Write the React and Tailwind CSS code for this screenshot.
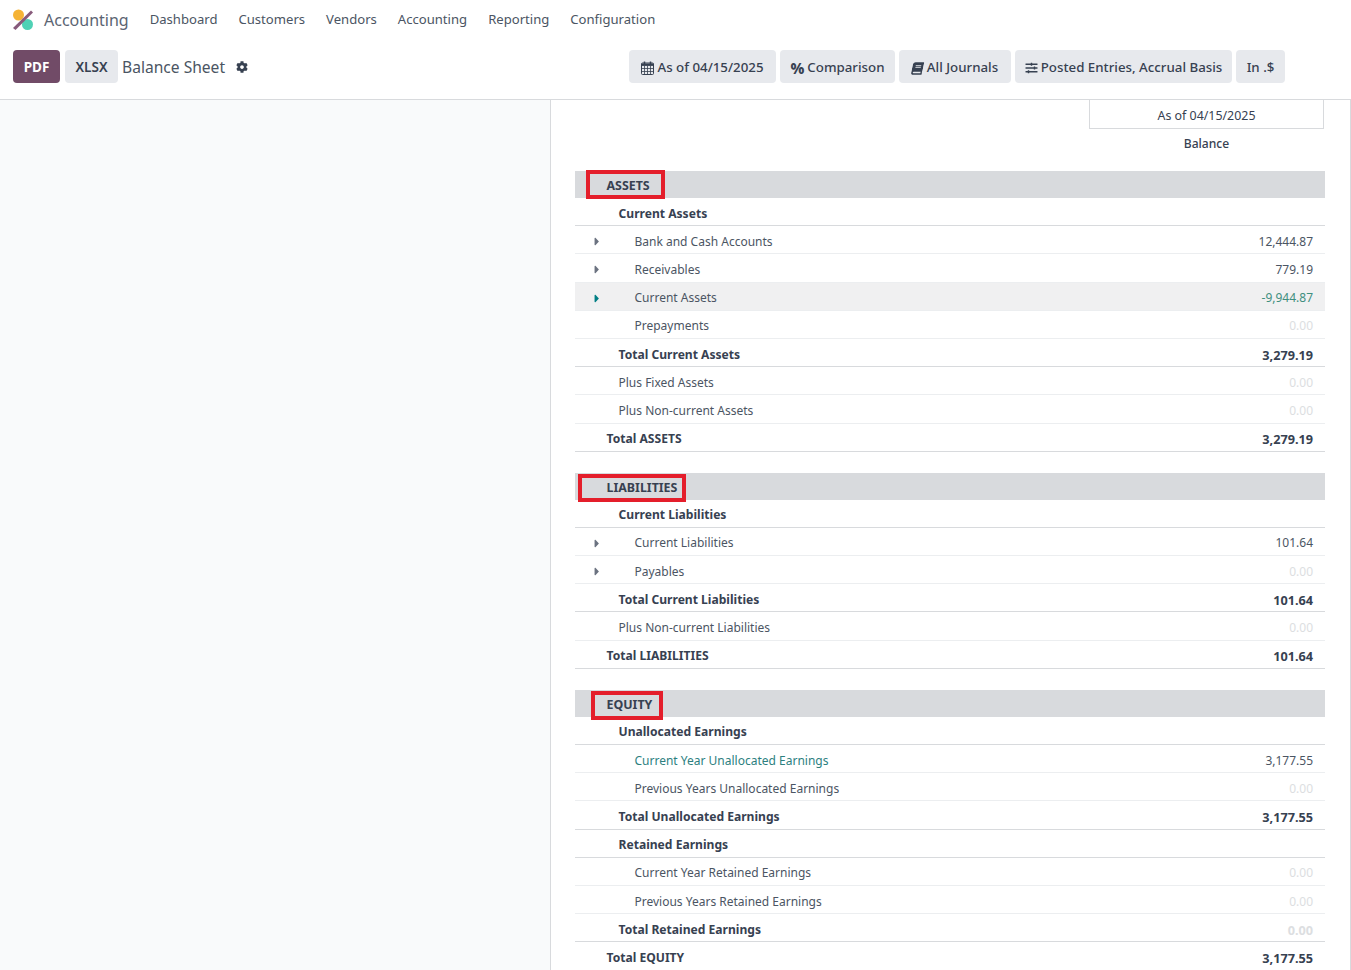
import { FaCog, FaCaretRight, FaBook, FaSlidersH } from "react-icons/fa";

const nav = ["Dashboard", "Customers", "Vendors", "Accounting", "Reporting", "Configuration"];

function CalendarIcon() {
  return (
    <svg width="13" height="14" viewBox="0 0 13 14" fill="none" stroke="currentColor" strokeWidth="1">
      <rect x="0.5" y="2" width="12" height="11.5" rx="1" />
      <path d="M0.5 4.5h12M0.5 7.5h12M0.5 10.5h12M3.5 4.5v9M6.5 4.5v9M9.5 4.5v9" strokeWidth="0.8" />
      <path d="M0.5 3.5h12" strokeWidth="2" />
      <path d="M3.5 0.5v2.5M9.5 0.5v2.5" strokeWidth="1.5" />
    </svg>
  );
}

const filters = [
  { label: "As of 04/15/2025", icon: <CalendarIcon />, w: "w-[147px]" },
  { label: "Comparison", icon: <span className="text-[15px] leading-none font-extrabold">%</span>, w: "w-[115px]" },
  { label: "All Journals", icon: <FaBook className="w-[11px] h-[13px] mr-[1px] -skew-x-12" />, w: "w-[112px]" },
  { label: "Posted Entries, Accrual Basis", icon: <FaSlidersH className="w-[13px] h-[12px]" />, w: "w-[217px]" },
  { label: "In .$", icon: null, w: "w-[49px]" },
];

const sections = [
  {
    title: "ASSETS",
    mt: "mt-[13px]",
    box: "left-[11px] top-[-1px] w-[79px] h-[29px]",
    rows: [
      { label: "Current Assets", type: "head" },
      { label: "Bank and Cash Accounts", value: "12,444.87", caret: true },
      { label: "Receivables", value: "779.19", caret: true },
      { label: "Current Assets", value: "-9,944.87", caret: true, active: true },
      { label: "Prepayments", value: "0.00", muted: true },
      { label: "Total Current Assets", value: "3,279.19", type: "total" },
      { label: "Plus Fixed Assets", value: "0.00", muted: true, type: "sub" },
      { label: "Plus Non-current Assets", value: "0.00", muted: true, type: "sub" },
      { label: "Total ASSETS", value: "3,279.19", type: "grand" },
    ],
  },
  {
    title: "LIABILITIES",
    mt: "mt-[21px]",
    box: "left-[3px] top-[1px] w-[108px] h-[28px]",
    rows: [
      { label: "Current Liabilities", type: "head" },
      { label: "Current Liabilities", value: "101.64", caret: true },
      { label: "Payables", value: "0.00", caret: true, muted: true },
      { label: "Total Current Liabilities", value: "101.64", type: "total" },
      { label: "Plus Non-current Liabilities", value: "0.00", muted: true, type: "sub" },
      { label: "Total LIABILITIES", value: "101.64", type: "grand" },
    ],
  },
  {
    title: "EQUITY",
    mt: "mt-[21px]",
    box: "left-[16px] top-[1px] w-[72px] h-[29px]",
    rows: [
      { label: "Unallocated Earnings", type: "head" },
      { label: "Current Year Unallocated Earnings", value: "3,177.55", link: true },
      { label: "Previous Years Unallocated Earnings", value: "0.00", muted: true },
      { label: "Total Unallocated Earnings", value: "3,177.55", type: "total" },
      { label: "Retained Earnings", type: "head" },
      { label: "Current Year Retained Earnings", value: "0.00", muted: true },
      { label: "Previous Years Retained Earnings", value: "0.00", muted: true },
      { label: "Total Retained Earnings", value: "0.00", type: "total", muted: true },
      { label: "Total EQUITY", value: "3,177.55", type: "grand" },
    ],
  },
];

function Logo() {
  return (
    <svg width="22" height="22" viewBox="0 0 22 22">
      <circle cx="6.5" cy="6" r="5.5" fill="#f5b335" />
      <circle cx="15.5" cy="15.5" r="5.5" fill="#4fd1b5" />
      <path d="M19 1.5 L21 3.5 L3.5 21 L1 19 Z" fill="#875a7b" />
    </svg>
  );
}

function Row({ row }) {
  const bold = ["head", "total", "grand"].includes(row.type);
  const pad =
    row.type === "grand" ? "pl-[31.5px]" : bold || row.type === "sub" ? "pl-[43.5px]" : "pl-[59.5px]";
  const border = bold ? "border-[#d8dadd]" : "border-[#eceef0]";

  return (
    <div
      className={`relative flex items-center justify-between h-[28.2px] border-b pt-[4px] pr-[12px] leading-[18px] ${border} ${pad} ${
        row.active ? "bg-[#f0f0f1]" : ""
      } ${bold ? "font-bold text-[#374151]" : "text-[12px] text-[#4b5563]"}`}
    >
      {row.caret && (
        <FaCaretRight
          className={`absolute left-[17px] w-[10px] h-[13px] ${row.active ? "text-[#017e84]" : "text-[#6b7280]"}`}
        />
      )}
      <span className={row.link ? "text-[#2d7f7f]" : ""}>{row.label}</span>
      {row.value && (
        <span
          className={`${bold ? "text-[12.7px]" : ""} ${
            row.muted ? "text-[#dcdee1]" : row.active ? "text-[#3f8f7f]" : ""
          }`}
        >
          {row.value}
        </span>
      )}
    </div>
  );
}

function Section({ section }) {
  return (
    <div className={section.mt}>
      <div className="relative flex items-center h-[27px] bg-[#d8dadd] pt-[4px] pl-[31.5px] font-bold text-[12.4px] text-[#374151]">
        {section.title}
        <div className={`absolute border-[4px] border-[#e41e2b] ${section.box}`} />
      </div>
      {section.rows.map((r, i) => (
        <Row key={i} row={r} />
      ))}
    </div>
  );
}

export default function App() {
  return (
    <div className="h-screen overflow-hidden bg-white text-[12.1px] text-[#374151] font-['Noto_Sans',sans-serif]">
      {/* top bar */}
      <div className="flex items-center gap-[21px] h-[39px] pl-[12px] text-[#4b5563] text-[13.1px]">
        <div className="flex items-center gap-[10px]">
          <Logo />
          <span className="text-[16px] text-[#5b6472]">Accounting</span>
        </div>
        {nav.map((n) => (
          <span key={n}>{n}</span>
        ))}
      </div>

      {/* control panel */}
      <div className="flex items-center h-[61px] pb-[5px] pl-[13px] pr-[66px] border-b border-[#d8dadd]">
        <button className="w-[47px] h-[33px] pt-[1px] rounded bg-[#714b67] text-white font-bold text-[13.5px]">PDF</button>
        <button className="ml-[5px] w-[53px] h-[33px] pt-[1px] rounded bg-[#e7e9ed] text-[#374151] font-semibold text-[13.5px]">XLSX</button>
        <span className="ml-[4px] pt-[2px] text-[15.6px] text-[#4b5563]">Balance Sheet</span>
        <FaCog className="ml-[11px] w-[12px] h-[12px] text-[#374151]" />
        <div className="ml-auto flex gap-[4px]">
          {filters.map((f) => (
            <button
              key={f.label}
              className={`flex items-center justify-center gap-[3px] h-[33px] pt-[3px] rounded bg-[#e7e9ed] text-[#374151] font-medium text-[13.3px] ${f.w}`}
            >
              {f.icon}
              {f.label}
            </button>
          ))}
        </div>
      </div>

      {/* body */}
      <div className="flex h-[871px]">
        <div className="w-[551px] shrink-0 bg-[#f9fafb] border-r border-[#d8dadd]" />
        <div className="w-[800px] border-r border-[#d8dadd] pl-[24px] pr-[25px]">
          <div className="flex justify-end pr-[1px]">
            <div className="w-[235px] h-[29px] pt-[5px] text-[12.4px] flex items-center justify-center border border-t-0 border-[#d8dadd]">
              As of 04/15/2025
            </div>
          </div>
          <div className="flex justify-end pr-[1px]">
            <div className="w-[235px] h-[29px] pt-[2px] flex items-center justify-center font-medium">Balance</div>
          </div>
          {sections.map((s) => (
            <Section key={s.title} section={s} />
          ))}
        </div>
      </div>
    </div>
  );
}
